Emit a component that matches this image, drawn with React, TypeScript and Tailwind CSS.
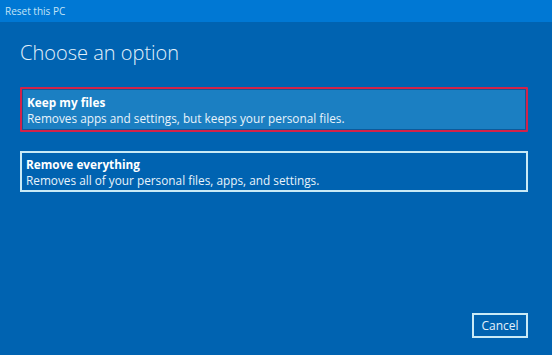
import React from "react";

const options = [
  {
    title: "Keep my files",
    desc: "Removes apps and settings, but keeps your personal files.",
    selected: true,
  },
  {
    title: "Remove everything",
    desc: "Removes all of your personal files, apps, and settings.",
    selected: false,
  },
];

export default function App() {
  return (
    <div
      className="w-[552px] h-[355px] flex flex-col bg-[#0063b1] text-white overflow-hidden"
      style={{ fontFamily: '"Open Sans", "Noto Sans", sans-serif' }}
    >
      <div className="h-[22px] bg-[#0078d4] flex items-center px-[5px] text-[10px] text-[#c3e4f7]">
        Reset this PC
      </div>
      <div className="flex-1 flex flex-col px-[20px]">
        <h1 className="mt-[21px] text-[20px] font-light text-[#e3f1fb] leading-none">Choose an option</h1>
        <div className="mt-[24px] flex flex-col gap-[19px] w-[508px]">
          {options.map((o) =>
            o.selected ? (
              <div key={o.title} className="border-[2px] border-[#d2234a] rounded-[1px]">
                <div className="border border-[#0d5a9a] bg-[#1b7fc2] px-[4px] pt-[4px] pb-[3px]">
                  <div className="text-[11.8px] font-bold leading-[16px]">{o.title}</div>
                  <div className="text-[11.8px] leading-[16px] text-[#e8f3fb]">{o.desc}</div>
                </div>
              </div>
            ) : (
              <div key={o.title} className="border-[2px] border-[#c9eaf6] px-[4px] pt-[3px] pb-[2px]">
                <div className="text-[11.8px] font-bold leading-[16px]">{o.title}</div>
                <div className="text-[11.8px] leading-[16px] text-[#e8f3fb]">{o.desc}</div>
              </div>
            )
          )}
        </div>
        <div className="flex-1" />
        <div className="flex justify-end w-[508px] mb-[17px]">
          <button className="w-[56px] h-[25px] border-[2px] border-[#c9eaf6] text-[12px] text-[#e3f1fb] flex items-center justify-center">
            Cancel
          </button>
        </div>
      </div>
    </div>
  );
}
